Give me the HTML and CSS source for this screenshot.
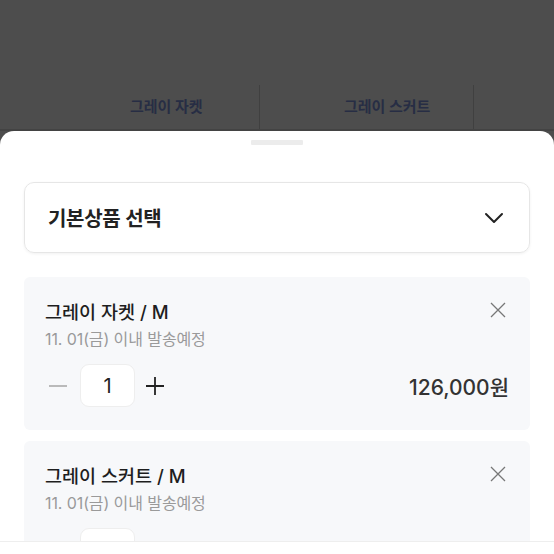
FILE: index.html
```html
<!DOCTYPE html>
<html lang="ko">
<head>
<meta charset="utf-8">
<link rel="stylesheet" href="styles.css">
</head>
<body>
<div class="page">
  <div class="tabs">
    <div class="tab">그레이 자켓</div>
    <div class="tab">그레이 스커트</div>
    <div class="tab"></div>
  </div>
</div>
<div class="sheet">
  <div class="handle"></div>
  <div class="select">
    <span class="select-label">기본상품 선택</span>
    <svg class="chevron" width="20" height="12" viewBox="0 0 20 12"><path d="M2 2 L10 10 L18 2" fill="none" stroke="#222" stroke-width="2" stroke-linecap="round" stroke-linejoin="round"/></svg>
  </div>
  <div class="items">
    <div class="item">
      <div class="item-head">
        <div class="item-title">그레이 자켓 / M</div>
        <svg class="close" width="16" height="16" viewBox="0 0 16 16"><path d="M1 1 L15 15 M15 1 L1 15" stroke="#777" stroke-width="1.3" fill="none"/></svg>
      </div>
      <div class="item-sub">11. 01(금) 이내 발송예정</div>
      <div class="item-row">
        <div class="qty">
          <svg class="minus" width="20" height="20" viewBox="0 0 20 20"><path d="M1 10 H19" stroke="#aaa" stroke-width="1.6"/></svg>
          <div class="qty-box">1</div>
          <svg class="plus" width="20" height="20" viewBox="0 0 20 20"><path d="M1 10 H19 M10 1 V19" stroke="#222" stroke-width="1.8"/></svg>
        </div>
        <div class="price">126,000원</div>
      </div>
    </div>
    <div class="item">
      <div class="item-head">
        <div class="item-title">그레이 스커트 / M</div>
        <svg class="close" width="16" height="16" viewBox="0 0 16 16"><path d="M1 1 L15 15 M15 1 L1 15" stroke="#777" stroke-width="1.3" fill="none"/></svg>
      </div>
      <div class="item-sub">11. 01(금) 이내 발송예정</div>
      <div class="item-row">
        <div class="qty">
          <svg class="minus" width="20" height="20" viewBox="0 0 20 20"><path d="M1 10 H19" stroke="#aaa" stroke-width="1.6"/></svg>
          <div class="qty-box">1</div>
          <svg class="plus" width="20" height="20" viewBox="0 0 20 20"><path d="M1 10 H19 M10 1 V19" stroke="#222" stroke-width="1.8"/></svg>
        </div>
        <div class="price">126,000원</div>
      </div>
    </div>
  </div>
  <div class="footer"></div>
</div>
</body>
</html>
```

FILE: styles.css
```css
* { box-sizing: border-box; }
html, body {
  margin: 0;
  height: 554px;
  overflow: hidden;
}
body {
  background: #4d4d4d;
  font-family: Inter, "Noto Sans CJK KR", "Noto Sans", sans-serif;
}
.page {
  height: 131px;
  display: flex;
  flex-direction: column;
  justify-content: flex-end;
}
.tabs {
  display: flex;
  height: 46px;
  padding-left: 46px;
  border-bottom: 2px solid #434343;
}
.tab {
  width: 214px;
  flex: none;
  border-right: 1px solid #404040;
  padding-left: 84px;
  font-size: 15px;
  font-weight: 700;
  color: #272d44;
  line-height: 44px;
}
.tab:last-child { border-right: none; }
.sheet {
  position: relative;
  height: 423px;
  background: #fff;
  border-radius: 14px 14px 0 0;
  overflow: hidden;
  padding: 9px 24px 0;
}
.handle {
  width: 52px;
  height: 5px;
  margin: 0 auto;
  background: #ececec;
  border-radius: 1px;
}
.select {
  margin-top: 37px;
  height: 71px;
  border: 1.5px solid #e6e6e6;
  border-radius: 10px;
  box-shadow: 0 1px 3px rgba(0,0,0,0.06);
  display: flex;
  align-items: center;
  justify-content: space-between;
  padding: 0 25px 0 23px;
}
.select-label {
  font-size: 20px;
  font-weight: 600;
  color: #222;
  letter-spacing: -0.3px;
}
.items {
  margin-top: 24px;
  display: flex;
  flex-direction: column;
  gap: 11px;
}
.item {
  background: #f7f8fa;
  border-radius: 6px;
  padding: 23px 21px 23px 21px;
}
.item-head {
  display: flex;
  justify-content: space-between;
  align-items: center;
  height: 24px;
}
.close { margin-top: -4px; margin-right: 3px; }
.item-title {
  font-size: 18.5px;
  font-weight: 500;
  color: #1e1e1e;
  line-height: 24px;
}
.item-sub {
  margin-top: 5px;
  font-size: 16px;
  line-height: 20px;
  color: #9a9a9a;
  letter-spacing: -0.1px;
}
.item-row {
  margin-top: 15px;
  display: flex;
  justify-content: space-between;
  align-items: center;
}
.qty {
  display: flex;
  align-items: center;
}
.minus { margin-left: 3px; }
.qty-box {
  width: 55px;
  height: 43px;
  margin: 0 10px 0 12px;
  background: #fff;
  border: 1px solid #eeeeee;
  border-radius: 9px;
  display: flex;
  align-items: center;
  justify-content: center;
  font-size: 20px;
  color: #222;
}
.price {
  font-size: 21px;
  font-weight: 500;
  color: #333;
}
.footer {
  position: absolute;
  left: 0;
  right: 0;
  bottom: 0;
  height: 13px;
  background: #fff;
  border-top: 1px solid #eeeeee;
}
```
